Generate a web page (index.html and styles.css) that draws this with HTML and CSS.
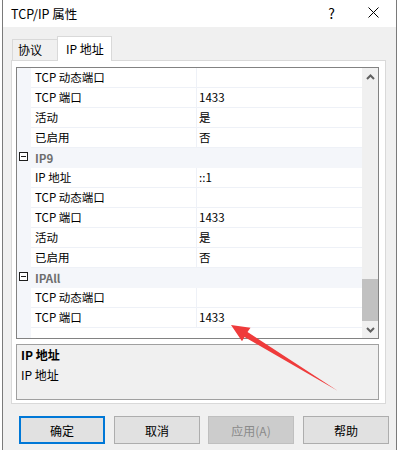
FILE: index.html
```html
<!DOCTYPE html>
<html lang="zh-CN">
<head>
    <meta charset="UTF-8">
    <title>TCP/IP 属性</title>
    <link rel="stylesheet" href="styles.css">
</head>
<body>
<div class="page">
    <div class="window">
        <!-- Title bar -->
        <div class="titlebar">
            <span class="title">TCP/IP 属性</span>
            <span class="help">?</span>
            <svg class="close" width="11" height="11" viewBox="0 0 11 11">
                <path d="M0.5 0.5 L10.5 10.5 M10.5 0.5 L0.5 10.5" stroke="#000" stroke-width="1" fill="none"/>
            </svg>
        </div>

        <div class="client">
            <!-- Tabs -->
            <div class="tabs">
                <div class="tab">协议</div>
                <div class="tab active">IP 地址</div>
            </div>

            <div class="panel">
                <!-- Property grid -->
                <div class="grid">
                    <div class="rows">
                        <div class="row"><div class="gutter"></div><div class="name">TCP 动态端口</div><div class="value"></div></div>
                        <div class="row"><div class="gutter"></div><div class="name">TCP 端口</div><div class="value">1433</div></div>
                        <div class="row"><div class="gutter"></div><div class="name">活动</div><div class="value">是</div></div>
                        <div class="row"><div class="gutter"></div><div class="name">已启用</div><div class="value">否</div></div>
                        <div class="row category"><div class="gutter"><span class="minus"></span></div><div class="cat-name">IP9</div></div>
                        <div class="row"><div class="gutter"></div><div class="name">IP 地址</div><div class="value">::1</div></div>
                        <div class="row"><div class="gutter"></div><div class="name">TCP 动态端口</div><div class="value"></div></div>
                        <div class="row"><div class="gutter"></div><div class="name">TCP 端口</div><div class="value">1433</div></div>
                        <div class="row"><div class="gutter"></div><div class="name">活动</div><div class="value">是</div></div>
                        <div class="row"><div class="gutter"></div><div class="name">已启用</div><div class="value">否</div></div>
                        <div class="row category"><div class="gutter"><span class="minus"></span></div><div class="cat-name">IPAll</div></div>
                        <div class="row"><div class="gutter"></div><div class="name">TCP 动态端口</div><div class="value"></div></div>
                        <div class="row"><div class="gutter"></div><div class="name">TCP 端口</div><div class="value">1433</div></div>
                    </div>
                    <div class="scrollbar">
                        <div class="sb-btn">
                            <svg width="9" height="6" viewBox="0 0 9 6"><path d="M1 5 L4.5 1.5 L8 5" stroke="#606060" stroke-width="2" fill="none"/></svg>
                        </div>
                        <div class="sb-track"><div class="sb-thumb"></div></div>
                        <div class="sb-btn">
                            <svg width="9" height="6" viewBox="0 0 9 6"><path d="M1 1 L4.5 4.5 L8 1" stroke="#606060" stroke-width="2" fill="none"/></svg>
                        </div>
                    </div>
                </div>

                <!-- Description -->
                <div class="desc">
                    <div class="desc-title">IP 地址</div>
                    <div class="desc-text">IP 地址</div>
                </div>
            </div>

            <!-- Dialog buttons -->
            <div class="buttons">
                <div class="btn default">确定</div>
                <div class="btn">取消</div>
                <div class="btn disabled">应用(A)</div>
                <div class="btn">帮助</div>
            </div>
        </div>
    </div>

    <!-- Red annotation arrow -->
    <svg class="arrow" width="399" height="450" viewBox="0 0 399 450">
        <polygon points="231,325 250.5,327.7 247.5,332 338,391 244.5,337 242,341.3" fill="#ef3b3b"/>
    </svg>
</div>
</body>
</html>
```

FILE: styles.css
```css
body {
    margin: 0;
    background: #fff;
    font-family: "Noto Sans CJK SC", "Noto Sans", sans-serif;
    color: #000;
}

.page {
    position: relative;
    width: 399px;
    height: 450px;
    overflow: hidden;
}

/* Dialog frame */
.window {
    margin-left: 2px;
    width: 395px;
    height: 450px;
    box-sizing: border-box;
    border-left: 1px solid #7a7a7a;
    border-right: 1px solid #7a7a7a;
    display: flex;
    flex-direction: column;
}

.titlebar {
    height: 27px;
    background: #fff;
    display: flex;
    align-items: center;
    padding-left: 8px;
    font-size: 12.5px;
}

.title {
    flex: 1;
}

.help {
    font-size: 14px;
    margin-right: 33px;
    margin-top: -2px;
}

.close {
    margin-right: 17px;
    margin-top: -3px;
}

.client {
    flex: 1;
    background: #f0f0f0;
    padding-top: 9px;
}

/* Tabs */
.tabs {
    display: flex;
    align-items: flex-end;
    height: 24px;
    padding-left: 9px;
    font-size: 12px;
}

.tab {
    width: 46px;
    height: 21px;
    box-sizing: border-box;
    border: 1px solid #d9d9d9;
    border-bottom: none;
    padding-left: 5px;
    line-height: 20px;
}

.tab.active {
    width: 55px;
    height: 25px;
    margin-left: -1px;
    margin-bottom: -1px;
    background: #fff;
    padding-left: 8px;
    line-height: 23px;
    position: relative;
}

.panel {
    margin-left: 8px;
    width: 375px;
    height: 344px;
    box-sizing: border-box;
    border: 1px solid #d9d9d9;
    background: #fff;
    padding: 6px 6px 3px 4px;
    display: flex;
    flex-direction: column;
    gap: 5px;
}

/* Property grid */
.grid {
    height: 272px;
    box-sizing: border-box;
    border: 1px solid #828282;
    display: flex;
}

.rows {
    flex: 1;
    background: linear-gradient(to right, #f4f6fa 14px, #fff 14px);
    font-size: 11.5px;
}

.row {
    display: flex;
    height: 20px;
}

.gutter {
    width: 14px;
    flex-shrink: 0;
    background: #f4f6fa;
    position: relative;
}

.name {
    width: 165px;
    border-right: 1px solid #eef1f7;
    border-bottom: 1px solid #eef1f7;
    padding-left: 4px;
    box-sizing: border-box;
    line-height: 19px;
    width: 166px;
}

.value {
    flex: 1;
    border-bottom: 1px solid #eef1f7;
    padding-left: 2px;
    line-height: 19px;
}

.category {
    background: #f4f6fa;
}

.cat-name {
    flex: 1;
    padding-left: 4px;
    font-weight: bold;
    color: #6d6d6d;
    line-height: 20px;
}

.minus {
    position: absolute;
    left: 2px;
    top: 4px;
    width: 9px;
    height: 9px;
    box-sizing: border-box;
    border: 1px solid #1e1e1e;
    background: #fff;
}

.minus::after {
    content: "";
    position: absolute;
    left: 1px;
    right: 1px;
    top: 3px;
    height: 1px;
    background: #1e1e1e;
}

.scrollbar {
    width: 16px;
    background: #f0f0f0;
    display: flex;
    flex-direction: column;
}

.sb-btn {
    height: 17px;
    display: flex;
    align-items: center;
    justify-content: center;
}

.sb-track {
    flex: 1;
}

.sb-thumb {
    margin-top: 194px;
    height: 42px;
    background: #c1c1c1;
}

/* Description box */
.desc {
    height: 56px;
    box-sizing: border-box;
    border: 1px solid #a0a0a0;
    background: #f0f0f0;
    padding-left: 4px;
    font-size: 12px;
    line-height: 20px;
}

.desc-title {
    font-weight: bold;
}

/* Buttons */
.buttons {
    display: flex;
    padding-left: 16px;
    margin-top: 12px;
    gap: 9px;
}

.btn {
    width: 86px;
    height: 28px;
    box-sizing: border-box;
    border: 1px solid #adadad;
    background: #e1e1e1;
    font-size: 12px;
    display: flex;
    align-items: center;
    justify-content: center;
}

.btn.default {
    border: 2px solid #0078d7;
}

.btn.disabled {
    background: #cccccc;
    border-color: #bfbfbf;
    color: #8a8a8a;
    margin-left: -1px;
}

.arrow {
    position: absolute;
    left: 0;
    top: 0;
    pointer-events: none;
}
```
